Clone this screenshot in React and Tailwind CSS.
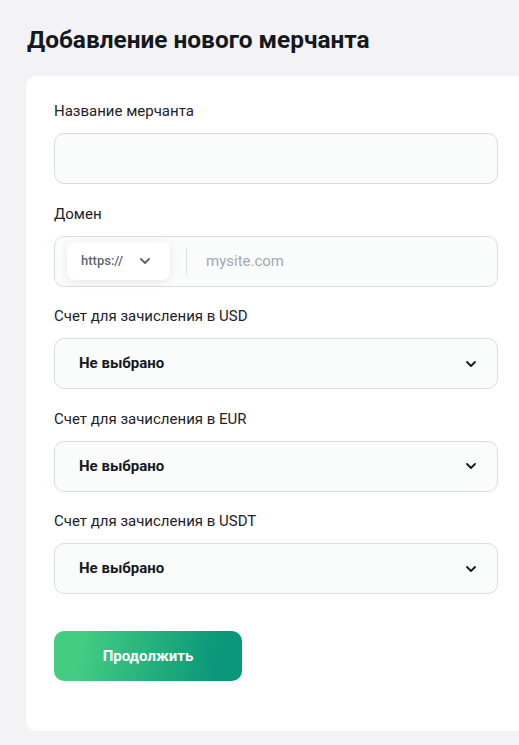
import { useState } from 'react';

function Chevron({ className }) {
  return (
    <svg viewBox="0 0 10 6" className={className} fill="none">
      <path d="M1 1l4 4 4-4" stroke="currentColor" strokeWidth="1.8" strokeLinecap="round" strokeLinejoin="round" />
    </svg>
  );
}

function Field({ label, children }) {
  return (
    <div className="flex flex-col">
      <label className="text-[15px] leading-5 text-[#1e2128]">{label}</label>
      <div className="mt-3">{children}</div>
    </div>
  );
}

function Select({ value }) {
  return (
    <div className="h-[51px] rounded-[10px] border border-[#d5dfdc] bg-[#fafcfc] flex items-center justify-between pl-6 pr-[21px]">
      <span className="text-[15px] font-bold text-[#16181d]">{value}</span>
      <Chevron className="w-[10px] h-[6px] text-[#16181d]" />
    </div>
  );
}

export default function App() {
  const [name, setName] = useState('');
  const [domain, setDomain] = useState('');

  const accounts = ['USD', 'EUR', 'USDT'];

  return (
    <div className="min-h-screen w-full overflow-hidden bg-[#f3f3f5] font-['Roboto',sans-serif]">
      <h1 className="pl-[27px] pt-[24px] text-[24.4px] leading-8 font-bold text-[#141820]">
        Добавление нового мерчанта
      </h1>
      <div className="ml-[26px] mt-[20px] w-[500px] rounded-[10px] bg-white pl-[28px] pr-[28px] pt-[25px] pb-[50px]">
        <div className="flex flex-col gap-[19.5px]">
          <Field label="Название мерчанта">
            <input
              value={name}
              onChange={e => setName(e.target.value)}
              className="w-full h-[51px] rounded-[10px] border border-[#d5dfdc] bg-[#fafcfc] px-4 outline-none"
            />
          </Field>
          <Field label="Домен">
            <div className="h-[51px] rounded-[10px] border border-[#d5dfdc] bg-[#fafcfc] flex items-center pl-3">
              <div className="w-[103px] h-[38px] rounded-[8px] bg-white shadow-[0_2px_10px_rgba(0,0,0,0.08)] flex items-center pl-[14px] pr-[20px] justify-between">
                <span className="text-[13px] font-medium text-[#5f6571]">https://</span>
                <Chevron className="w-[10px] h-[6px] text-[#5f6571]" />
              </div>
              <div className="ml-4 w-px h-[27px] bg-[#dde3e3]" />
              <input
                value={domain}
                onChange={e => setDomain(e.target.value)}
                placeholder="mysite.com"
                className="ml-[19px] flex-1 bg-transparent text-[15px] outline-none placeholder:text-[#a3a7ae]"
              />
            </div>
          </Field>
          {accounts.map(cur => (
            <Field key={cur} label={`Счет для зачисления в ${cur}`}>
              <Select value="Не выбрано" />
            </Field>
          ))}
        </div>
        <button className="mt-[37px] w-[188px] h-[50px] rounded-[10px] bg-[linear-gradient(100deg,#43cc82_15%,#0b977a_85%)] text-white text-[15px] font-bold">
          Продолжить
        </button>
      </div>
    </div>
  );
}
